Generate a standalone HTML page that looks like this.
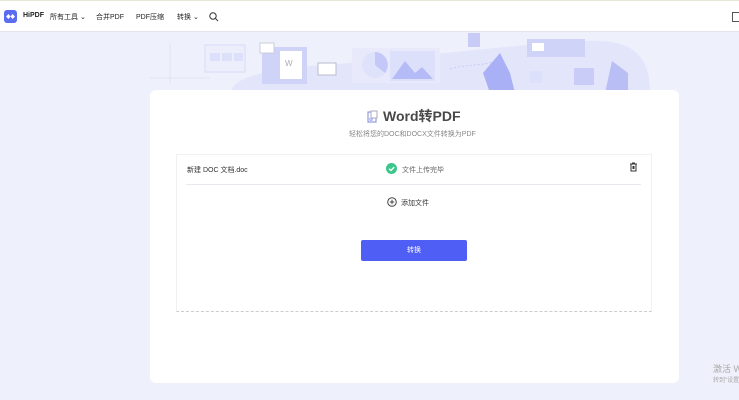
<!DOCTYPE html><html><head><meta charset="utf-8"><style>
body{margin:0;width:739px;height:400px;overflow:hidden;background:#eef0fb;font-family:"Liberation Sans","Noto Sans CJK SC",sans-serif;position:relative}
.hd{position:absolute;left:0;top:0;width:739px;height:32px;background:#fff;border-top:1px solid #e8e8d8;border-bottom:1px solid #e3e4ee;box-sizing:border-box}
.hd span{position:absolute;top:11px;font-size:7px;color:#222;white-space:nowrap}
.card{position:absolute;left:150px;top:90px;width:529px;height:293px;background:#fff;border-radius:6px}
.box{position:absolute;left:176px;top:154px;width:476px;height:158px;border:1px solid #f1f1f4;border-bottom:1px dashed #ccc;box-sizing:border-box}
.t{position:absolute;font-size:7px;color:#333;white-space:nowrap}
</style></head><body>
<div class="hd">
<div style="position:absolute;left:4px;top:9px;width:13px;height:13px;background:#5b6cf0;border-radius:3px"></div>
<svg style="position:absolute;left:6px;top:12px" width="9" height="7"><path d="M0 3.5L2.5 1L4.5 3.5L2.5 6ZM4.5 3.5L6.5 1L9 3.5L6.5 6Z" fill="#fff"/></svg>
<span style="left:23px;font-weight:bold">HiPDF</span>
<span style="left:50px">所有工具 ⌄</span>
<span style="left:96px">合并PDF</span>
<span style="left:136px">PDF压缩</span>
<span style="left:177px">转换 ⌄</span>
<svg style="position:absolute;left:209px;top:11px" width="10" height="10"><circle cx="4" cy="4" r="3.2" fill="none" stroke="#333" stroke-width="1"/><path d="M6.5 6.5L9 9" stroke="#333"/></svg>
<div style="position:absolute;left:732px;top:11px;width:9px;height:8px;border:1px solid #555"></div>
</div>
<svg style="position:absolute;left:150px;top:33px" width="500" height="60">
<path d="M80 60C85 40 130 35 200 30C300 20 380 10 440 8C490 6 500 30 500 60Z" fill="#e3e6fb"/>
<path d="M0 45H60M20 10V50" stroke="#dde0f0" stroke-width="0.7"/>
<rect x="55" y="12" width="40" height="27" fill="#eceefc" stroke="#d8dbf6"/>
<rect x="60" y="20" width="10" height="8" fill="#dde0fa"/><rect x="72" y="20" width="10" height="8" fill="#dde0fa"/><rect x="84" y="20" width="9" height="8" fill="#dde0fa"/>
<rect x="112" y="14" width="45" height="37" fill="#cfd3f8"/>
<rect x="130" y="18" width="22" height="28" fill="#fff"/>
<text x="135" y="33" font-size="8" fill="#aab">W</text>
<rect x="110" y="10" width="14" height="10" fill="#fff" stroke="#ccd"/>
<rect x="168" y="30" width="18" height="12" fill="#fff" stroke="#bbc"/>
<rect x="202" y="15" width="88" height="35" fill="#e8eafc"/>
<circle cx="225" cy="32" r="13" fill="#dfe2fb"/><path d="M225 19A13 13 0 0 1 235 40L225 32Z" fill="#c3c8f8"/>
<rect x="240" y="18" width="45" height="30" fill="#dde0fb"/>
<path d="M242 46L255 28L265 40L272 34L283 46Z" fill="#b5bbf6"/>
<path d="M300 36C320 30 330 35 355 25" stroke="#c6cbf3" stroke-dasharray="2 2" fill="none"/>
<path d="M333 40L350 20L360 40L365 60L340 60Z" fill="#a9b0f5"/>
<rect x="318" y="0" width="12" height="14" fill="#c7cbf6"/>
<rect x="377" y="6" width="58" height="18" fill="#cfd3f8"/>
<rect x="382" y="10" width="12" height="8" fill="#fff"/>
<rect x="380" y="38" width="12" height="12" fill="#dde0fa"/>
<rect x="424" y="35" width="20" height="17" fill="#c8ccf7"/>
<path d="M462 28L470 34L478 40L478 60L455 60Z" fill="#b9bef5"/>
</svg>
<div class="card"></div>
<svg style="position:absolute;left:367px;top:110px" width="11" height="13"><rect x="1" y="2" width="8" height="10" fill="#fff" stroke="#7d86d8"/><rect x="4" y="1" width="6" height="7" fill="#fff" stroke="#aab"/><text x="2.3" y="11" font-size="5" fill="#5b6cf0">w</text></svg>
<div class="t" style="left:383px;top:106px;font-size:14px;font-weight:bold;color:#484848">Word转PDF</div>
<div class="t" style="left:349px;top:129px;font-size:7px;color:#888">轻松将您的DOC和DOCX文件转换为PDF</div>
<div class="box"></div>
<div class="t" style="left:187px;top:165px">新建 DOC 文档.doc</div>
<svg style="position:absolute;left:386px;top:163px" width="11" height="11"><circle cx="5.5" cy="5.5" r="5.5" fill="#3cc68a"/><path d="M3 5.7L5 7.5L8.2 4" stroke="#fff" stroke-width="1.3" fill="none"/></svg>
<div class="t" style="left:402px;top:165px;color:#666">文件上传完毕</div>
<svg style="position:absolute;left:629px;top:162px" width="9" height="10"><path d="M1 2H8M3 1H6M2 2V9H7V2M4 4V7M5 4V7" stroke="#333" fill="none"/></svg>
<div style="position:absolute;left:186px;top:184px;width:455px;height:1px;background:#e8e8ee"></div>
<svg style="position:absolute;left:387px;top:197px" width="10" height="10"><circle cx="5" cy="5" r="4.3" fill="none" stroke="#444"/><path d="M5 2.8V7.2M2.8 5H7.2" stroke="#444"/></svg>
<div class="t" style="left:401px;top:198px">添加文件</div>
<div style="position:absolute;left:361px;top:240px;width:106px;height:21px;background:#4f5ef5;border-radius:2px;color:#fff;font-size:7px;text-align:center;line-height:21px">转换</div>
<div class="t" style="left:713px;top:362px;font-size:9px;color:#aaa">激活 W</div>
<div class="t" style="left:713px;top:375px;font-size:6px;color:#aaa">转到"设置"</div>
</body></html>
